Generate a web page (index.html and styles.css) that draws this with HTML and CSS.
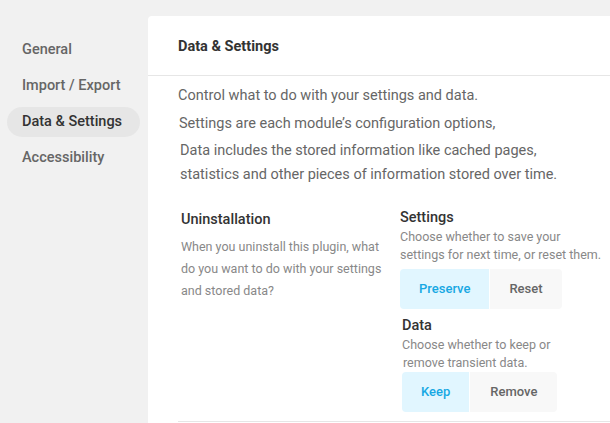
FILE: index.html
```html
<!DOCTYPE html>
<html lang="en">
<head>
<meta charset="utf-8">
<title>Data &amp; Settings</title>
<link rel="stylesheet" href="styles.css">
</head>
<body>
<div class="page">
  <nav class="sidebar">
    <div class="nav-item">General</div>
    <div class="nav-item">Import / Export</div>
    <div class="nav-item active">Data &amp; Settings</div>
    <div class="nav-item">Accessibility</div>
  </nav>
  <main class="card">
    <div class="card-header">Data &amp; Settings</div>
    <div class="card-body">
      <p class="intro">Control what to do with your settings and data.</p>
      <p class="intro intro-2">Settings are each module’s configuration options,</p>
      <p class="intro intro-3">Data includes the stored information like cached pages, statistics and other pieces of information stored over time.</p>
      <div class="row">
        <div class="row-label">
          <h3 class="label-title">Uninstallation</h3>
          <p class="label-desc">When you uninstall this plugin, what do you want to do with your settings and stored data?</p>
        </div>
        <div class="row-options">
          <div class="option">
            <h4 class="option-title">Settings</h4>
            <p class="option-desc">Choose whether to save your<br>settings for next time, or reset them.</p>
            <div class="toggle">
              <span class="toggle-btn on">Preserve</span>
              <span class="toggle-btn">Reset</span>
            </div>
          </div>
          <div class="option option-data">
            <h4 class="option-title">Data</h4>
            <p class="option-desc">Choose whether to keep or<br><span class="indent">remove transient data.</span></p>
            <div class="toggle toggle-tight">
              <span class="toggle-btn on">Keep</span>
              <span class="toggle-btn">Remove</span>
            </div>
          </div>
        </div>
      </div>
    </div>
  </main>
</div>
</body>
</html>
```

FILE: styles.css
```css
html, body {
  margin: 0;
  padding: 0;
}
body {
  background: #f1f1f1;
  font-family: Roboto, "Noto Sans", "Liberation Sans", sans-serif;
  color: #666;
  overflow: hidden;
  height: 423px;
}
.page {
  display: flex;
  padding-top: 16px;
  align-items: flex-start;
}
.sidebar {
  width: 141px;
  flex: none;
  padding: 19px 0 0 7px;
  display: flex;
  flex-direction: column;
  gap: 6px;
}
.nav-item {
  width: 133px;
  box-sizing: border-box;
  height: 30px;
  line-height: 30px;
  padding-left: 15px;
  border-radius: 15px;
  font-size: 14.5px;
  font-weight: 500;
  color: #666;
}
.nav-item.active {
  background: #e6e6e6;
  color: #333;
}
.card {
  flex: 1;
  background: #fff;
  border-radius: 4px 0 0 0;
  min-height: 420px;
}
.card-header {
  height: 60px;
  box-sizing: border-box;
  display: flex;
  align-items: center;
  padding: 2px 30px 0;
  border-bottom: 1px solid #e6e6e6;
  font-size: 14.5px;
  font-weight: 700;
  color: #333;
}
.card-body {
  padding: 8px 0 0 30px;
}
.intro {
  margin: 0 0 4px;
  font-size: 14.5px;
  line-height: 24px;
  color: #666;
}
.intro-2 {
  padding-left: 1px;
  margin-bottom: 3px;
}
.intro-3 {
  padding-left: 2px;
  margin-bottom: 0;
  max-width: 410px;
}
.row {
  display: flex;
  margin-top: 21px;
  padding: 0 0 9px 3px;
  border-bottom: 1px solid #e6e6e6;
}
.row-label {
  width: 219px;
  flex: none;
  padding-top: 2px;
  padding-right: 10px;
  box-sizing: border-box;
}
.label-title {
  margin: 0;
  font-size: 14.5px;
  font-weight: 500;
  line-height: 20px;
  color: #333;
}
.label-desc {
  margin: 6px 0 0;
  font-size: 12.5px;
  line-height: 22px;
  color: #888;
}
.row-options {
  flex: 1;
  display: flex;
  flex-direction: column;
}
.option-title {
  margin: 0;
  font-size: 14.5px;
  font-weight: 500;
  line-height: 20px;
  color: #333;
}
.option-desc {
  margin: 0;
  font-size: 12.5px;
  line-height: 17.5px;
  color: #888;
  white-space: nowrap;
}
.indent {
  padding-left: 1px;
}
.toggle {
  display: flex;
  gap: 1px;
  margin-top: 6px;
}
.toggle-btn {
  height: 40px;
  line-height: 40px;
  padding: 0 19px;
  font-size: 13px;
  font-weight: 500;
  color: #666;
  background: #f8f8f8;
}
.toggle-btn:first-child {
  border-radius: 4px 0 0 4px;
}
.toggle-btn:last-child {
  border-radius: 0 4px 4px 0;
}
.toggle-btn.on {
  background: #e1f6ff;
  color: #17a8e3;
}
.option-data {
  margin-top: 7px;
  padding-left: 2px;
}
.option-data .option-desc {
  line-height: 18px;
}
.option-data .toggle-tight {
  margin-top: 0;
}
.option-data .toggle-btn:last-child {
  padding: 0 20px;
}
```
